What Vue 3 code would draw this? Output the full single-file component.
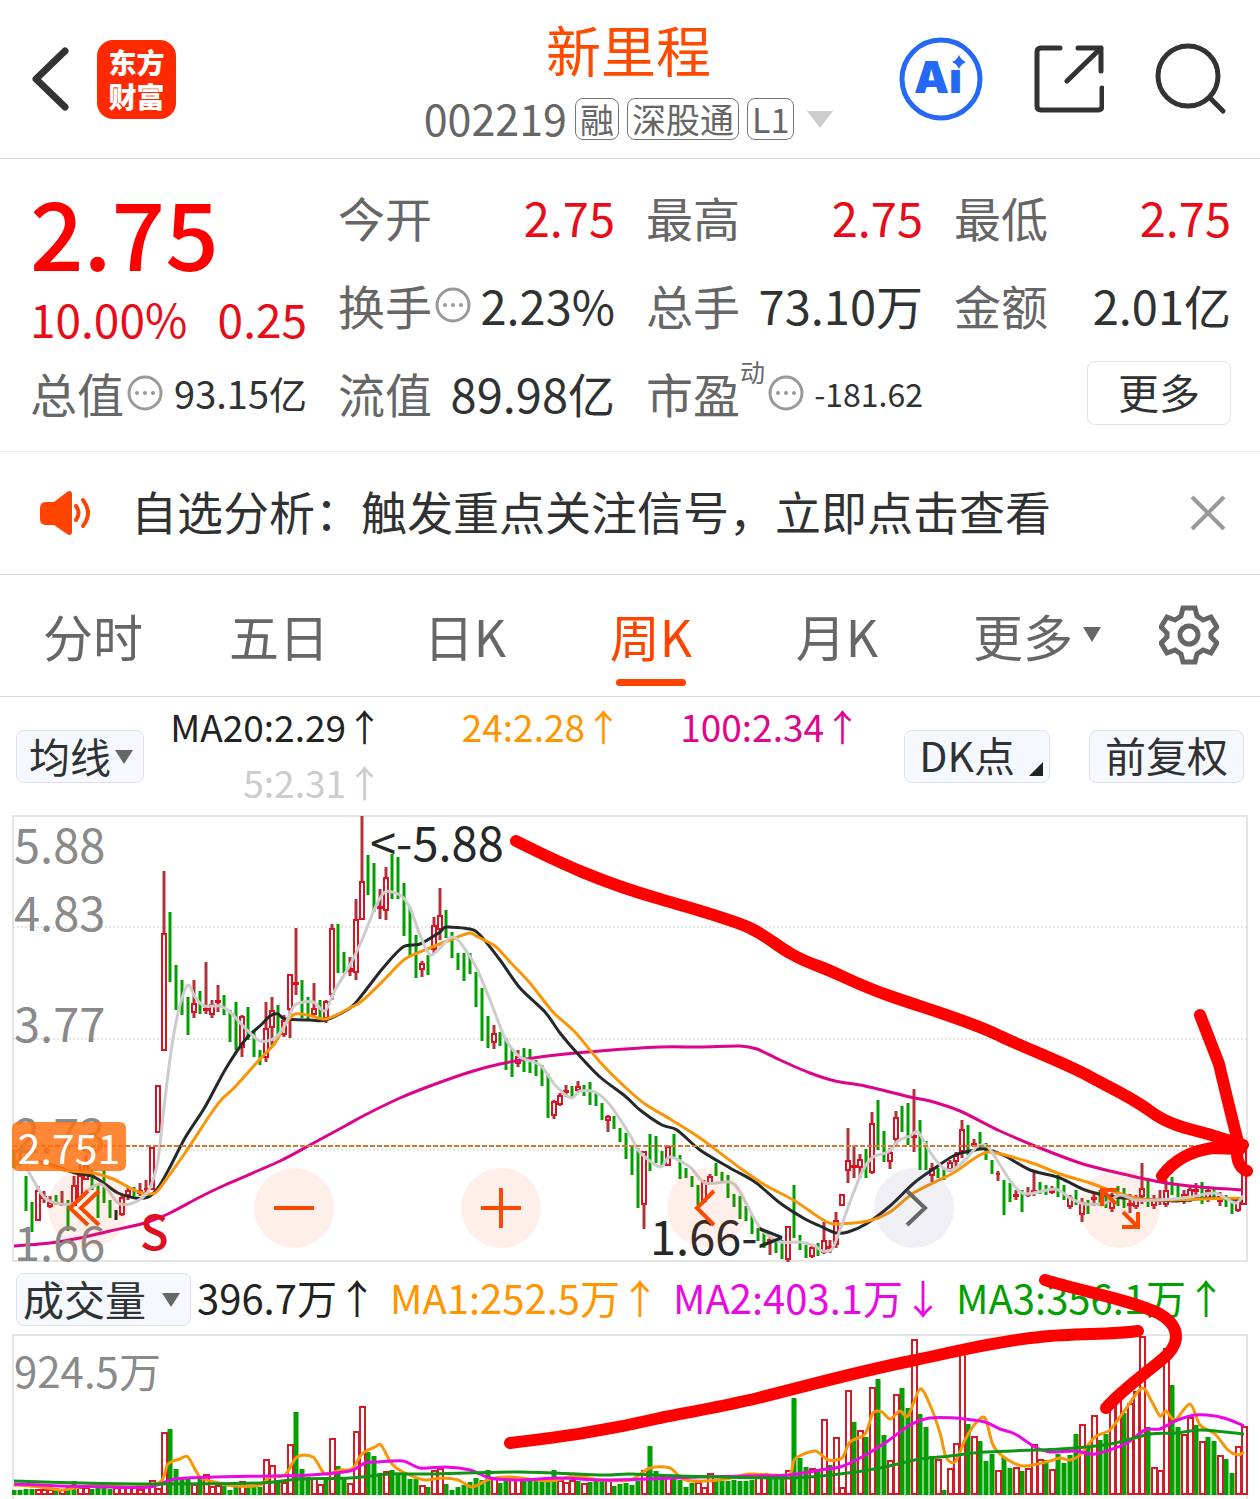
<script setup>
import { ref } from 'vue'

const tabs = ['分时', '五日', '日K', '周K', '月K']
const activeTab = ref('周K')
const noticeOpen = ref(true)

const STEP = 6
const FIRST_X = 14
const VOLUME_BASE = 1495

// One entry per week: direction, high-low, and for rising weeks an optional body range.
const candleData = `g1150-1168 g1152-1166 g1176-1211 g1202-1232 r1186-1221:1190-1221 r1191-1203:1196-1199 r1196-1208:1202-1207 g1195-1205 r1191-1206:1204-1206 g1200-1231
r1176-1206:1185-1206 r1160-1200:1175-1198 r1155-1180:1165-1180 g1170-1190 g1185-1218 g1170-1203 g1200-1218 k1210-1220 r1195-1216:1197-1215 r1188-1200:1190-1196
g1187-1196 r1183-1196:1190-1194 r1180-1193:1188-1190 r1147-1190:1147-1190 r1085-1133:1085-1133 r871-1051:933-1051 g912-982 g965-1010 g980-1015 g997-1035
r980-1018:1003-1013 g991-1014 r962-1014:1008-1011 r1000-1018:1004-1015 r985-1012:1000-1003 g995-1015 g1010-1042 g1002-1050 r1015-1057:1016-1048 g1007-1040
g1030-1057 g1050-1065 r1002-1062:1028-1058 r997-1045:1010-1028 g1005-1035 r1015-1037:1020-1035 r974-1038:974-1010 r928-995:982-985 g980-1018 g997-1020
r983-1018:1008-1015 g1000-1020 r1000-1023:1001-1019 r924-1000:928-995 g924-973 g952-973 r957-976:968-972 r899-980:919-973 r816-920:881-920 g855-895
g863-912 r889-919:906-909 r867-920:877-911 g854-899 g857-899 g883-936 g907-957 g935-978 r961-977:963-970 g955-975
r917-953:925-950 r888-940:915-930 g910-938 g932-958 g953-970 g953-981 g953-974 g972-1007 g988-1041 g1016-1048
r1025-1049:1033-1043 g1032-1046 g1038-1070 g1048-1077 r1050-1067:1056-1064 g1048-1072 g1049-1073 g1060-1076 g1065-1086 g1074-1118
r1100-1119:1101-1116 r1093-1106:1095-1105 r1085-1097:1090-1093 g1086-1097 r1081-1092:1086-1091 g1085-1096 g1082-1105 g1092-1106 g1103-1120 r1115-1132:1116-1121
g1116-1129 g1128-1142 g1133-1159 g1146-1175 g1148-1208 r1151-1229:1151-1205 g1134-1171 g1136-1163 g1151-1167 r1145-1166:1146-1166
g1134-1158 g1155-1179 g1168-1178 g1176-1187 g1185-1205 r1180-1203:1182-1202 r1174-1184:1176-1184 g1163-1176 g1172-1181 g1175-1198
g1194-1207 g1196-1219 g1206-1221 g1215-1234 g1228-1241 g1233-1248 r1236-1255:1239-1243 g1240-1253 g1240-1259 r1226-1262:1226-1260
g1185-1238 g1235-1250 g1245-1258 r1245-1258:1247-1257 g1243-1256 r1222-1254:1240-1253 r1240-1253:1246-1249 r1212-1248:1220-1245 r1194-1206:1194-1206 r1128-1183:1160-1171
r1145-1178:1165-1168 r1154-1178:1159-1168 g1149-1178 r1112-1174:1123-1173 g1100-1150 g1131-1162 r1148-1169:1152-1162 r1111-1145:1117-1140 g1106-1132 g1103-1145
r1089-1152:1135-1138 g1120-1170 g1141-1170 r1163-1182:1168-1176 g1168-1178 g1168-1180 r1160-1172:1162-1170 r1152-1167:1155-1162 r1120-1158:1129-1152 g1125-1155
r1139-1147:1143-1146 g1132-1150 g1143-1160 g1160-1174 r1171-1181:1173-1175 g1180-1215 g1183-1202 r1190-1200:1194-1197 g1190-1212 r1187-1197:1193-1196
r1173-1196:1190-1194 g1182-1194 g1185-1195 r1186-1194:1190-1193 g1175-1197 g1185-1200 r1195-1209:1197-1207 g1190-1205 r1198-1222:1202-1215 g1200-1214
r1192-1206:1197-1200 g1190-1206 g1192-1208 r1193-1212:1200-1209 g1186-1206 g1188-1208 r1194-1213:1203-1206 r1195-1209:1197-1207 r1163-1204:1188-1197 g1180-1207
r1195-1209:1199-1206 r1190-1205:1199-1202 r1180-1207:1190-1205 g1177-1195 g1185-1200 r1190-1204:1194-1199 r1185-1202:1189-1200 r1183-1200:1189-1192 g1182-1204 r1186-1202:1190-1200
g1187-1200 r1192-1206:1196-1202 g1195-1207 g1198-1214 r1197-1212:1199-1211 r1146-1205:1147-1205`

const volumeData = `g1490 g1490 g1489 g1489 r1489 r1489 r1489 g1490 r1489 g1485 g1481 r1487 r1487 g1489 g1487 g1487 g1489 r1487 r1487 r1487
r1487 r1489 r1485 r1480 r1488 r1432 g1429 g1469 g1478 g1477 r1484 g1478 r1474 r1486 r1485 g1486 g1490 g1486 r1481 g1485
g1486 g1487 r1459 r1465 g1480 r1482 r1444 g1412 g1469 g1477 r1478 r1484 g1479 r1438 g1466 g1478 r1483 r1431 r1406 g1452
g1456 g1473 r1471 g1470 g1473 g1473 g1479 g1479 r1485 g1487 r1470 r1468 g1484 g1490 g1487 g1485 g1482 g1478 g1480 g1470
r1478 g1483 g1480 r1477 r1478 g1478 g1481 g1481 g1480 g1479 g1470 r1480 r1482 r1480 g1481 r1483 g1482 g1480 g1481 r1480
g1486 g1484 g1483 g1485 g1481 r1470 g1446 g1471 g1475 r1477 g1478 g1480 g1487 g1483 r1482 r1487 r1473 g1481 g1481 g1481
g1480 g1481 g1481 g1480 r1476 r1473 g1479 g1479 g1478 r1470 g1398 g1458 g1467 r1468 g1471 r1419 g1465 r1437 r1487 r1390
g1422 r1430 g1437 r1387 g1379 g1435 r1460 r1394 g1388 g1408 r1339 g1414 g1427 g1456 r1459 g1490 r1468 r1443 r1346 g1424
r1436 g1441 g1461 g1454 r1470 g1457 g1468 r1467 g1471 r1468 r1444 r1459 g1460 r1469 g1454 g1463 g1455 g1434 r1424 g1448
r1415 g1440 g1434 r1405 r1400 g1413 r1403 r1391 r1336 g1427 r1467 r1470 r1348 g1385 g1427 r1434 r1417 g1425 r1441 g1437
g1441 r1455 g1459 g1473 r1446 r1426`

const candles = candleData.split(/\s+/).map((entry, i) => {
  const [range, body] = entry.slice(1).split(':')
  const [high, low] = range.split('-').map(Number)
  const [top, bottom] = (body || range).split('-').map(Number)
  return { kind: entry[0], x: FIRST_X + i * STEP, high, low, top, bottom }
})

const volumes = volumeData.split(/\s+/).map((entry, i) => ({
  kind: entry[0],
  x: FIRST_X + i * STEP,
  top: Number(entry.slice(1)),
}))

const wicks = (kind) =>
  candles.filter((c) => c.kind === kind).map((c) => `M${c.x} ${c.high}V${c.low}`).join('')

const bodies = candles
  .filter((c) => c.kind === 'r')
  .map((c) => `M${c.x - 2} ${c.top + 1}h4V${c.bottom - 1}h-4z`)
  .join('')

const fallingVolume = volumes
  .filter((v) => v.kind === 'g')
  .map((v) => `M${v.x} ${v.top}V${VOLUME_BASE}`)
  .join('')

const risingVolume = volumes
  .filter((v) => v.kind === 'r')
  .map((v) => `M${v.x - 2} ${v.top + 1}h5V${VOLUME_BASE - 1}h-5z`)
  .join('')

// Smooth curve through the listed points.
function curve(text) {
  const p = text.split(' ').map((s) => s.split(',').map(Number))
  let d = `M${p[0][0]} ${p[0][1]}`
  for (let i = 0; i < p.length - 1; i++) {
    const a = p[i - 1] || p[i]
    const b = p[i]
    const c = p[i + 1]
    const e = p[i + 2] || c
    d += `C${b[0] + (c[0] - a[0]) / 7} ${b[1] + (c[1] - a[1]) / 7} ${c[0] - (e[0] - b[0]) / 7} ${c[1] - (e[1] - b[1]) / 7} ${c[0]} ${c[1]}`
  }
  return d
}

const priceLines = [
  { name: 'ma100', d: curve('14,1246 50,1243 80,1238 110,1231 145,1223 170,1213 200,1197 225,1185 280,1161 310,1145 345,1126 365,1115 400,1098 430,1086 470,1072 500,1064 540,1057 600,1051 660,1047 700,1047 740,1046 757,1049 780,1060 810,1073 835,1081 865,1086 910,1097 930,1101 960,1111 1000,1131 1040,1148 1080,1163 1110,1171 1160,1182 1200,1187 1243,1190') },
  { name: 'ma20', d: curve('14,1162 40,1162 60,1168 75,1173 92,1176 105,1184 118,1193 135,1198 148,1197 158,1188 170,1167 185,1138 205,1107 225,1070 245,1040 262,1024 270,1016 278,1014 285,1019 310,1020 326,1020 350,1008 362,995 383,968 403,947 420,944 440,932 446,927 470,929 480,935 500,960 520,988 545,1012 560,1033 577,1053 600,1077 625,1096 640,1110 662,1125 677,1130 700,1150 730,1168 755,1182 780,1203 805,1219 820,1226 836,1233 848,1232 866,1224 890,1206 914,1183 935,1168 955,1155 975,1150 985,1149 1005,1156 1030,1170 1060,1178 1085,1190 1115,1197 1140,1199 1175,1201 1210,1198 1243,1200') },
  { name: 'ma24', d: curve('14,1162 40,1163 63,1170 93,1173 113,1179 130,1188 142,1193 155,1193 165,1181 185,1153 210,1115 222,1099 235,1087 260,1059 275,1043 287,1022 295,1014 308,1015 326,1019 350,1008 362,1001 385,979 405,959 430,948 455,938 470,933 478,937 495,946 510,962 530,983 553,1012 575,1032 600,1062 625,1087 645,1104 670,1119 700,1138 740,1168 765,1185 795,1201 820,1218 835,1224 868,1221 890,1212 912,1194 935,1182 955,1172 975,1158 988,1152 1005,1155 1035,1164 1060,1174 1090,1183 1115,1192 1140,1199 1165,1200 1200,1199 1243,1198') },
  { name: 'ma5', d: curve('26,1167 35,1183 45,1198 60,1204 75,1203 88,1190 100,1184 108,1190 118,1203 130,1204 142,1198 150,1188 158,1160 164,1107 172,1045 180,1005 188,985 195,997 204,1006 220,1006 230,1012 245,1028 260,1041 275,1038 285,1025 295,1005 313,1002 325,1011 335,990 350,965 362,940 375,908 385,892 400,895 410,908 420,935 430,955 440,948 450,938 458,940 475,965 490,1000 505,1038 520,1057 540,1065 555,1085 571,1098 580,1091 595,1092 610,1105 630,1135 638,1150 650,1161 661,1167 670,1157 690,1167 705,1183 730,1182 740,1192 755,1220 765,1233 780,1242 800,1242 815,1246 822,1251 832,1249 840,1230 850,1202 862,1172 873,1157 888,1152 898,1141 910,1136 918,1132 930,1152 942,1167 952,1170 965,1160 978,1146 988,1147 1000,1165 1012,1183 1025,1194 1055,1189 1070,1198 1085,1204 1105,1203 1120,1195 1135,1200 1160,1200 1190,1197 1215,1193 1235,1203 1243,1196') },
]

const volumeLines = [
  { name: 'vol1', d: curve('14,1485 40,1487 62,1490 75,1488 95,1485 130,1487 160,1482 168,1464 180,1459 188,1457 200,1477 215,1482 235,1486 260,1485 270,1477 285,1475 297,1457 313,1457 325,1474 340,1470 352,1469 362,1454 375,1447 381,1445 392,1464 405,1473 425,1480 440,1478 458,1480 472,1487 490,1479 510,1477 550,1481 575,1476 600,1480 630,1480 650,1468 670,1468 685,1480 720,1480 750,1474 788,1475 795,1459 815,1451 828,1460 842,1458 850,1442 865,1434 873,1413 882,1412 890,1419 900,1411 908,1416 920,1389 930,1405 940,1433 946,1457 955,1462 965,1440 975,1424 985,1418 993,1445 1005,1458 1024,1466 1050,1461 1060,1458 1070,1460 1080,1455 1095,1437 1110,1430 1125,1410 1142,1388 1152,1402 1160,1416 1166,1411 1175,1420 1190,1404 1200,1425 1215,1434 1228,1450 1238,1455 1244,1452') },
  { name: 'vol2', d: curve('14,1484 60,1486 110,1487 150,1487 175,1479 215,1477 270,1476 310,1475 350,1471 365,1463 378,1462 403,1461 420,1468 445,1467 470,1470 490,1478 520,1480 560,1478 600,1480 650,1479 700,1477 750,1476 790,1475 820,1470 840,1467 860,1458 885,1443 910,1425 930,1418 955,1418 965,1419 985,1422 1000,1429 1015,1434 1035,1447 1050,1452 1075,1451 1095,1454 1125,1444 1145,1430 1160,1429 1175,1421 1195,1415 1215,1416 1230,1420 1244,1426') },
  { name: 'vol3', d: curve('14,1481 80,1483 150,1484 260,1483 300,1479 350,1478 390,1474 430,1474 520,1472 600,1475 630,1474 680,1476 790,1478 840,1474 880,1468 920,1459 950,1456 985,1452 1060,1449 1110,1444 1150,1434 1175,1433 1200,1430 1225,1432 1244,1434') },
]

const strokes = [
  'M516 841C560 863 600 882 660 899C700 911 730 919 750 928C775 940 780 952 818 966C840 974 855 984 890 996C930 1010 970 1021 1000 1036C1030 1050 1055 1059 1085 1074C1110 1088 1130 1096 1150 1111C1170 1126 1190 1129 1208 1134L1243 1145',
  'M1200 1015 1219 1064C1225 1090 1232 1118 1238 1142C1235 1156 1238 1168 1247 1171',
  'M1162 1176C1174 1160 1192 1151 1212 1148L1240 1149',
  'M510 1443C560 1437 605 1431 660 1418C690 1412 720 1407 758 1398C810 1385 860 1371 911 1361C950 1353 990 1342 1040 1337C1075 1333 1110 1335 1138 1331',
  'M1045 1280C1085 1292 1130 1300 1158 1313C1180 1325 1180 1341 1168 1354C1155 1367 1128 1384 1106 1408',
]
</script>

<template>
  <main class="page">
    <header class="header">
      <div class="header-left">
        <button class="plain" aria-label="返回">
          <svg width="40" height="66" viewBox="0 0 40 66"><path d="M35 5 6 33 35 61" fill="none" stroke="#333" stroke-width="7" stroke-linecap="round" stroke-linejoin="round" /></svg>
        </button>
        <div class="logo">东方<br />财富</div>
      </div>
      <div class="title">
        <h1>新里程</h1>
        <div class="code">
          <span class="num">002219</span>
          <span class="chip">融</span>
          <span class="chip">深股通</span>
          <span class="chip">L1</span>
          <svg class="code-arrow" width="26" height="17" viewBox="0 0 26 17"><path d="M0 0h26L13 17z" fill="#ccc" /></svg>
        </div>
      </div>
      <div class="header-right">
        <button class="plain" aria-label="Ai">
          <svg width="84" height="84" viewBox="0 0 84 84">
            <circle cx="42" cy="42" r="39" fill="#fff" stroke="#2468f5" stroke-width="5" />
            <text x="15" y="56" class="ai">Ai</text>
            <path d="M49 16h17v17H49z" fill="#fff" />
            <path d="M60 18q2 5 7 7-5 2-7 7-2-5-7-7 5-2 7-7z" fill="#2468f5" />
          </svg>
        </button>
        <button class="plain" aria-label="分享">
          <svg width="70" height="70" viewBox="0 0 70 70" fill="none" stroke="#333" stroke-width="5" stroke-linecap="round" stroke-linejoin="round"><path d="M26 4H7q-4 0-4 4v54q0 4 4 4h57q4 0 4-4V44M44 4h23v23M67 4 33 37" /></svg>
        </button>
        <button class="plain" aria-label="搜索">
          <svg width="72" height="72" viewBox="0 0 72 72" fill="none" stroke="#333" stroke-width="5" stroke-linecap="round"><circle cx="33" cy="33" r="30" /><path d="m55 55 13 13" /></svg>
        </button>
      </div>
    </header>

    <section class="quote">
      <div class="price">
        <strong>2.75</strong>
        <div class="change"><span>10.00%</span><span>0.25</span></div>
      </div>
      <div class="cell"><span class="label">今开</span><span class="up">2.75</span></div>
      <div class="cell"><span class="label">最高</span><span class="up">2.75</span></div>
      <div class="cell"><span class="label">最低</span><span class="up">2.75</span></div>
      <div class="cell">
        <span class="label">换手<svg class="dots" viewBox="0 0 36 36"><circle cx="18" cy="18" r="16" /><path d="M10 18h0M18 18h0M26 18h0" /></svg></span><span>2.23%</span>
      </div>
      <div class="cell"><span class="label">总手</span><span>73.10万</span></div>
      <div class="cell"><span class="label">金额</span><span>2.01亿</span></div>
      <div class="cell">
        <span class="label">总值<svg class="dots" viewBox="0 0 36 36"><circle cx="18" cy="18" r="16" /><path d="M10 18h0M18 18h0M26 18h0" /></svg></span><span class="mid">93.15亿</span>
      </div>
      <div class="cell"><span class="label">流值</span><span>89.98亿</span></div>
      <div class="cell">
        <span class="label">市盈<sup>动</sup><svg class="dots" viewBox="0 0 36 36"><circle cx="18" cy="18" r="16" /><path d="M10 18h0M18 18h0M26 18h0" /></svg></span><span class="small">-181.62</span>
      </div>
      <div class="cell end"><button class="more">更多</button></div>
    </section>

    <section v-if="noticeOpen" class="notice">
      <svg width="52" height="44" viewBox="0 0 52 44"><path d="M6 11h8L27 1q5-3 5 3v36q0 6-5 3L14 34H6q-6 0-6-6V17q0-6 6-6z" fill="#ff4400" /><path d="M36 15q5 7 0 14M43 9q10 13 0 26" fill="none" stroke="#ff4400" stroke-width="4" stroke-linecap="round" /></svg>
      <a href="#analysis">自选分析：触发重点关注信号，立即点击查看</a>
      <button class="plain" aria-label="关闭" @click="noticeOpen = false">
        <svg width="36" height="36" viewBox="0 0 36 36"><path d="m2 2 32 32M34 2 2 34" stroke="#999" stroke-width="4" /></svg>
      </button>
    </section>

    <nav class="tabs">
      <button v-for="tab in tabs" :key="tab" class="tab" :class="{ active: tab === activeTab }" @click="activeTab = tab">{{ tab }}</button>
      <button class="tab">更多<svg class="tab-arrow" width="18" height="15" viewBox="0 0 18 15"><path d="M0 0h18L9 15z" fill="#666" /></svg></button>
      <button class="tab" aria-label="设置">
        <svg width="60" height="60" viewBox="0 0 60 60" fill="none" stroke="#666" stroke-width="5"><path d="M24 3h12l2 8 6 4 8-3 6 10-6 6v4l6 6-6 10-8-3-6 4-2 8H24l-2-8-6-4-8 3-6-10 6-6v-4l-6-6 6-10 8 3 6-4z" /><circle cx="30" cy="30" r="9" /></svg>
      </button>
    </nav>

    <section class="charts">
      <div class="ma-bar">
        <label class="picker narrow">
          <select aria-label="均线"><option>均线</option></select>
          <svg width="18" height="14" viewBox="0 0 18 14"><path d="M0 0h18L9 14z" fill="#666" /></svg>
        </label>
        <div class="ma-values">
          <span class="c-black">MA20:2.29↑</span>
          <span class="c-orange">24:2.28↑</span>
          <span class="c-pink">100:2.34↑</span>
          <span class="c-gray">5:2.31↑</span>
        </div>
        <button class="tool dk">DK点<svg width="14" height="14" viewBox="0 0 14 14"><path d="M14 0v14H0z" fill="#222" /></svg></button>
        <button class="tool">前复权</button>
      </div>

      <div class="panel price-panel">
        <svg class="plot" viewBox="12 815 1236 447" preserveAspectRatio="none" fill="none">
          <path d="M13 927H1247M13 1039H1247M13 1150H1247" stroke="#ccc" stroke-dasharray="2 2" />
          <path :d="wicks('r')" stroke="#b03438" stroke-width="3" />
          <path :d="wicks('g')" stroke="#00a000" stroke-width="3" />
          <path :d="wicks('k')" stroke="#222" stroke-width="3" />
          <path :d="bodies" stroke="#dc1020" stroke-width="2" fill="#fff" />
          <path v-for="line in priceLines" :key="line.name" :d="line.d" :class="['line', line.name]" />
          <path d="M13 1146H1247" stroke="#d87830" stroke-width="2" stroke-dasharray="5 2" />
        </svg>
        <span class="axis y1">5.88</span>
        <span class="axis y2">4.83</span>
        <span class="axis y3">3.77</span>
        <span class="axis y4">2.73</span>
        <span class="axis y5">1.66</span>
        <span class="last">2.751</span>
        <span class="sell">S</span>
        <span class="mark high">&lt;-5.88</span>
        <span class="mark low">1.66-&gt;</span>
        <div class="controls">
          <button aria-label="最左"><svg viewBox="0 0 80 80"><path d="M40 23 22 40l18 17M51 23 33 40l18 17" /></svg></button>
          <button aria-label="缩小"><svg viewBox="0 0 80 80"><path d="M20 40h40" /></svg></button>
          <button aria-label="放大"><svg viewBox="0 0 80 80"><path d="M20 40h40M40 20v40" /></svg></button>
          <button aria-label="左移"><svg viewBox="0 0 80 80"><path d="M47 23 30 40l17 17" /></svg></button>
          <button class="muted" aria-label="右移"><svg viewBox="0 0 80 80"><path d="m33 23 18 17-18 17" /></svg></button>
          <button aria-label="全屏"><svg viewBox="0 0 80 80"><path d="M37 22H22v16M22 22l14 14M58 44v15H42M43 44l15 15" /></svg></button>
        </div>
      </div>

      <div class="volume-bar">
        <label class="picker wide">
          <select aria-label="副图指标"><option>成交量</option></select>
          <svg width="18" height="14" viewBox="0 0 18 14"><path d="M0 0h18L9 14z" fill="#666" /></svg>
        </label>
        <div class="volume-values">
          <span class="c-black">396.7万↑</span>
          <span class="c-orange">MA1:252.5万↑</span>
          <span class="c-magenta">MA2:403.1万↓</span>
          <span class="c-green">MA3:356.1万↑</span>
        </div>
      </div>

      <div class="panel volume-panel">
        <svg class="plot" viewBox="12 1334 1236 165" preserveAspectRatio="none" fill="none">
          <path :d="fallingVolume" stroke="#00a000" stroke-width="5" />
          <path :d="risingVolume" stroke="#d41c28" stroke-width="2" fill="#fff" />
          <path v-for="line in volumeLines" :key="line.name" :d="line.d" :class="['line', line.name]" />
        </svg>
        <span class="axis volume-max">924.5万</span>
      </div>

      <svg class="drawing" viewBox="0 697 1260 802" preserveAspectRatio="none">
        <path v-for="(d, i) in strokes" :key="i" :d="d" />
      </svg>
    </section>
  </main>
</template>

<style>
body {
  margin: 0;
  background: #fff;
}
</style>

<style scoped>
* {
  box-sizing: border-box;
}
.page {
  font-family: "Noto Sans CJK SC", sans-serif;
  color: #303232;
  background: #fff;
  overflow: hidden;
}
svg {
  display: block;
  flex: none;
}
button,
select {
  font-family: inherit;
  color: inherit;
  margin: 0;
}
.plain {
  border: 0;
  padding: 0;
  background: none;
}
.header {
  display: grid;
  grid-template-columns: 1fr auto 1fr;
  height: 159px;
  padding: 0 33px 0 30px;
  border-bottom: 1px solid #d8d8d8;
}
.header-left,
.header-right {
  display: flex;
  align-items: center;
}
.header-left {
  gap: 27px;
}
.header-right {
  justify-content: flex-end;
  gap: 51px;
}
.logo {
  width: 79px;
  height: 79px;
  padding-top: 5px;
  border-radius: 16px;
  background: #ff2a00;
  color: #fff;
  font-size: 28px;
  font-weight: 900;
  line-height: 34px;
  text-align: center;
}
.ai {
  font-family: Inter, sans-serif;
  font-size: 44px;
  font-weight: 900;
  fill: #2468f5;
}
.title {
  display: flex;
  flex-direction: column;
  align-items: center;
  padding-top: 18px;
}
.title h1 {
  margin: 0;
  color: #ff4a00;
  font-size: 55px;
  font-weight: 400;
  line-height: 60px;
}
.code {
  display: flex;
  align-items: center;
  gap: 8px;
  margin-top: 20px;
  color: #666;
}
.num {
  font-size: 43px;
  line-height: 38px;
  padding-bottom: 4px;
}
.chip {
  height: 42px;
  padding: 0 4px;
  border: 1px solid #777;
  border-radius: 8px;
  font-size: 34px;
  line-height: 40px;
}
.code-arrow {
  margin-left: 5px;
}
.quote {
  display: grid;
  grid-template-columns: repeat(4, 1fr);
  grid-auto-rows: 88px;
  column-gap: 31px;
  height: 293px;
  padding: 14px 29px 0 30px;
  border-bottom: 1px solid #eee;
  font-size: 47px;
}
.price {
  grid-row: span 2;
  color: #e80c18;
}
.price strong {
  display: block;
  color: #f00;
  font-size: 94px;
  font-weight: 500;
  line-height: 114px;
}
.change {
  display: flex;
  justify-content: space-between;
  font-size: 46px;
  line-height: 62px;
}
.cell {
  display: flex;
  align-items: center;
  justify-content: space-between;
  line-height: 88px;
  white-space: nowrap;
}
.cell.end {
  justify-content: flex-end;
}
.label {
  display: flex;
  align-items: center;
  color: #666;
}
.label sup {
  align-self: flex-start;
  font-size: 25px;
  line-height: 44px;
}
.dots {
  width: 36px;
  height: 36px;
  margin-left: 3px;
  fill: none;
  stroke: #999;
  stroke-width: 3;
  stroke-linecap: round;
}
.dots path {
  stroke-width: 4;
}
.up {
  color: #e80c18;
}
.mid {
  font-size: 38px;
}
.small {
  font-size: 32px;
}
.more {
  width: 144px;
  height: 64px;
  padding: 0 0 4px;
  border: 1px solid #e2e2e2;
  border-radius: 8px;
  background: #fff;
  font-size: 41px;
  line-height: 56px;
}
.notice {
  display: flex;
  align-items: center;
  height: 123px;
  padding: 0 34px 0 40px;
  border-bottom: 1px solid #d8d8d8;
}
.notice a {
  flex: 1;
  margin-left: 39px;
  padding-bottom: 6px;
  color: #303232;
  font-size: 46px;
  text-decoration: none;
  white-space: nowrap;
}
.tabs {
  display: grid;
  grid-template-columns: repeat(5, 186fr) 214fr 90fr;
  height: 122px;
  padding-right: 26px;
  border-bottom: 1px solid #d8d8d8;
}
.tab {
  position: relative;
  display: flex;
  align-items: center;
  justify-content: center;
  padding: 0 0 2px;
  border: 0;
  background: none;
  color: #666;
  font-size: 50px;
  white-space: nowrap;
}
.tab.active {
  color: #ff4400;
}
.tab.active::after {
  content: "";
  position: absolute;
  bottom: 10px;
  width: 70px;
  height: 7px;
  border-radius: 4px;
  background: #ff4400;
}
.tab-arrow {
  margin-left: 10px;
}
.charts {
  position: relative;
}
.ma-bar {
  display: flex;
  align-items: center;
  height: 118px;
  padding: 0 16px;
}
.picker {
  position: relative;
  height: 53px;
}
.picker select {
  width: 100%;
  height: 100%;
  border: 1px solid #dfe0ea;
  border-radius: 8px;
  background: #f5f9ff;
  appearance: none;
  font-size: 41px;
  line-height: 48px;
}
.picker svg {
  position: absolute;
  top: 20px;
  right: 11px;
  pointer-events: none;
}
.narrow {
  width: 128px;
}
.narrow select {
  padding: 0 0 4px 12px;
}
.wide {
  width: 175px;
}
.wide select {
  padding: 0 0 4px 6px;
}
.ma-values {
  display: grid;
  grid-template-columns: repeat(3, 239px);
  margin-right: auto;
  padding-bottom: 4px;
  font-size: 37px;
  line-height: 56px;
  text-align: right;
  white-space: nowrap;
}
.tool {
  height: 53px;
  padding: 0 15px 4px;
  border: 1px solid #dfe0ea;
  border-radius: 8px;
  background: #f5f9ff;
  font-size: 41px;
  line-height: 47px;
  white-space: nowrap;
}
.dk {
  display: flex;
  align-items: center;
  gap: 14px;
  margin-right: 39px;
  padding: 0 6px 4px 14px;
}
.dk svg {
  margin-top: 30px;
}
.c-black {
  color: #222;
}
.c-orange {
  color: #ff9500;
}
.c-pink {
  color: #e0058c;
}
.c-gray {
  color: #ccc;
}
.c-magenta {
  color: #ec08e4;
}
.c-green {
  color: #00a000;
}
.panel {
  position: relative;
  margin: 0 12px;
}
.panel::before {
  content: "";
  position: absolute;
  inset: 0;
  border: 2px solid #e5e5e5;
}
.price-panel {
  height: 447px;
}
.volume-panel {
  height: 165px;
}
.volume-panel::before {
  border-bottom: 0;
}
.plot {
  position: relative;
  width: 100%;
  height: 100%;
}
.line {
  stroke-width: 3;
  stroke-linejoin: round;
}
.ma20 {
  stroke: #252828;
}
.ma24,
.vol1 {
  stroke: #f99608;
}
.ma100 {
  stroke: #dc0488;
}
.ma5 {
  stroke: #ccc;
}
.vol2 {
  stroke: #ec08e4;
}
.vol3 {
  stroke: #109418;
}
.axis,
.mark,
.sell,
.last {
  position: absolute;
  font-size: 47px;
  line-height: 48px;
  white-space: nowrap;
}
.axis {
  left: 2px;
  color: #8a8a8a;
}
.y1 {
  top: 4px;
}
.y2 {
  top: 72px;
}
.y3 {
  top: 183px;
}
.y4 {
  top: 294px;
}
.y5 {
  top: 402px;
}
.volume-max {
  top: 12px;
  font-size: 42px;
}
.last {
  top: 307px;
  left: 0;
  width: 114px;
  height: 49px;
  border-radius: 6px;
  background: rgba(255, 115, 20, 0.86);
  color: #fff;
  font-size: 41px;
  text-align: center;
}
.sell {
  top: 391px;
  left: 128px;
  color: #dc1020;
  font-weight: 500;
}
.mark {
  color: #252828;
}
.high {
  top: 2px;
  left: 358px;
}
.low {
  top: 396px;
  left: 638px;
}
.controls {
  position: absolute;
  right: 88px;
  bottom: 14px;
  left: 36px;
  display: flex;
  justify-content: space-between;
}
.controls button {
  width: 80px;
  height: 80px;
  padding: 0;
  border: 0;
  border-radius: 50%;
  background: rgba(255, 80, 30, 0.09);
}
.controls svg {
  fill: none;
  stroke: #fa4a00;
  stroke-width: 4;
}
.controls .muted {
  background: rgba(90, 80, 130, 0.09);
}
.controls .muted svg {
  stroke: #666;
}
.volume-bar {
  display: flex;
  align-items: center;
  height: 72px;
  padding: 2px 16px 0;
}
.volume-values {
  display: flex;
  gap: 13px;
  margin-left: 6px;
  padding-bottom: 4px;
  font-size: 40px;
  line-height: 56px;
  white-space: nowrap;
}
.drawing {
  position: absolute;
  inset: 0;
  width: 100%;
  height: 100%;
  pointer-events: none;
  fill: none;
  stroke: #f00;
  stroke-width: 12;
  stroke-linecap: round;
  stroke-linejoin: round;
}
</style>
